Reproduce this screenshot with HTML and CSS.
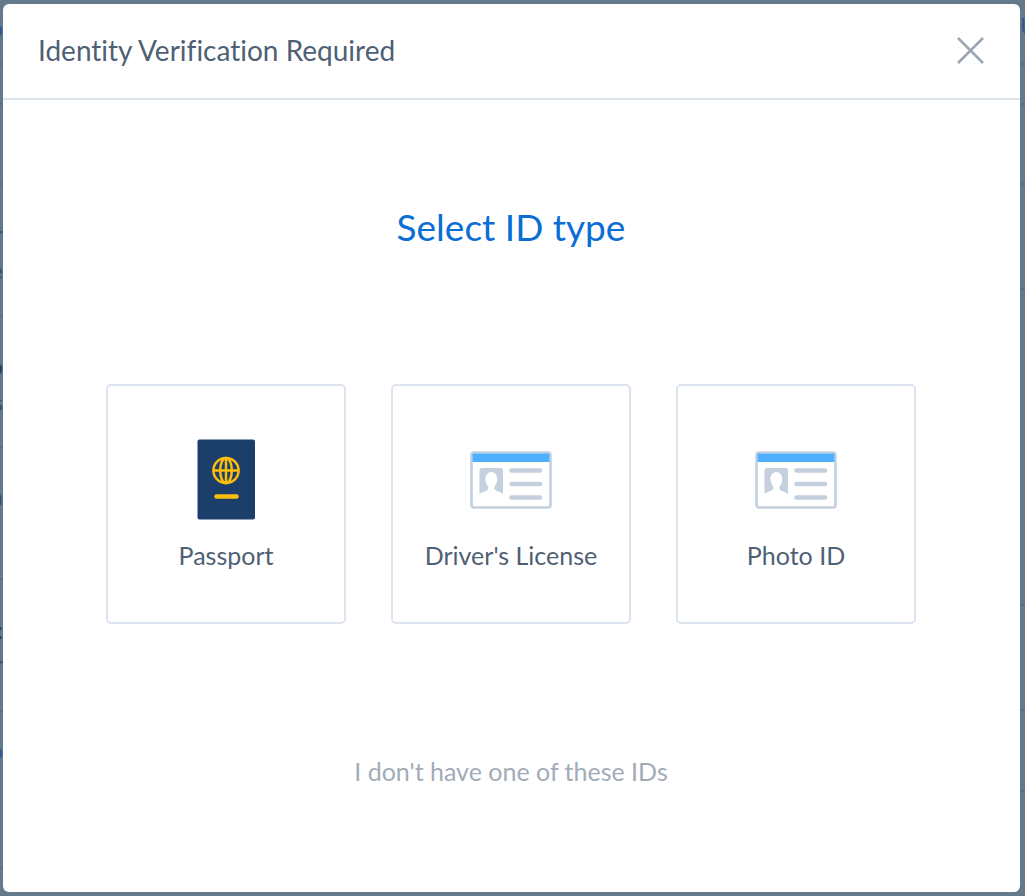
FILE: index.html
```html
<!DOCTYPE html>
<html lang="en">
<head>
<meta charset="utf-8">
<meta name="viewport" content="width=device-width, initial-scale=1">
<title>Identity Verification Required</title>
<link rel="stylesheet" href="styles.css">
</head>
<body>
<div class="page-behind" aria-hidden="true">
  <div class="edge edge-left">
    <span class="peek peek-link" style="top:14px">o</span>
    <span class="peek peek-link" style="top:220px">r</span>
    <span class="peek" style="top:256px">e</span>
    <span class="peek peek-dark" style="top:352px">o</span>
    <span class="peek" style="top:388px">s</span>
    <span class="peek" style="top:482px">n</span>
    <span class="peek peek-dark" style="top:616px">:</span>
    <span class="peek" style="top:650px">r</span>
    <span class="peek peek-link" style="top:736px">o</span>
    <i class="rule" style="top:63px"></i>
    <i class="rule" style="top:103px"></i>
    <i class="rule" style="top:183px"></i>
    <i class="rule" style="top:315px"></i>
    <i class="rule" style="top:446px"></i>
    <i class="rule" style="top:578px"></i>
    <i class="rule" style="top:710px"></i>
    <i class="rule" style="top:867px"></i>
  </div>
  <div class="edge edge-right">
    <span class="peek peek-link" style="top:12px">U</span>
    <i class="rule" style="top:63px"></i>
    <i class="rule" style="top:103px"></i>
    <i class="rule" style="top:183px"></i>
    <i class="rule" style="top:288px"></i>
    <i class="rule" style="top:604px"></i>
    <i class="rule" style="top:709px"></i>
    <i class="rule" style="top:790px"></i>
  </div>
</div>
<main class="dialog" role="dialog" aria-modal="true" aria-labelledby="dialog-title">
  <header class="dialog-header">
    <h1 class="dialog-title" id="dialog-title">Identity Verification Required</h1>
    <button class="close" type="button" aria-label="Close">
      <svg width="28" height="28" viewBox="0 0 28 28" fill="none" stroke="#9ba6b2" stroke-width="2.5"><path d="M2 2 27 27M27 2 2 27"/></svg>
    </button>
  </header>
  <div class="dialog-body">
    <h2 class="heading">Select ID type</h2>
    <div class="options">
      <button class="option" type="button">
        <svg class="option-icon" viewBox="0 0 82 82" fill="none">
          <rect x="12.500" y="1.500" width="57.500" height="80" rx="2" fill="#1b3e6b"/>
          <g stroke="#fdbd0b" stroke-width="2.5">
            <circle cx="41" cy="32.500" r="12.600"/>
            <ellipse cx="41" cy="32.500" rx="5.800" ry="12.600"/>
            <path d="M41 20v25M28.500 32.500h25"/>
          </g>
          <path d="M31.500 58.500h20" stroke="#fdbd0b" stroke-width="4.500" stroke-linecap="round"/>
        </svg>
        <span class="option-label">Passport</span>
      </button>
      <button class="option" type="button">
        <svg class="option-icon" viewBox="0 -1 82 82" fill="none">
          <rect x="1.500" y="13.500" width="79" height="55" rx="2.500" stroke="#c4d0dd" stroke-width="2.600"/>
          <path d="M2.500 14.500h77v8.500h-77z" fill="#4eaeff"/>
          <path d="M12 29h18.500a2.500 2.500 0 0 1 2.500 2.500V55c-2-2-6-2.500-8-4.300-1.300-1.200-.8-2.700.3-4.200 1.300-2 1.900-4.300 1.900-6.500 0-4-2.500-7-5.900-7s-5.900 3-5.900 7c0 2.200.7 4.500 2 6.500 1 1.500 1.500 3 .2 4.200-2 1.800-6.100 2.300-8.100 4.300V31.500A2.500 2.500 0 0 1 12 29z" fill="#c4d0dd"/>
          <path d="M41.500 31.500h28.500M41.500 45h28.500M41.500 58.500h28.500" stroke="#c4d0dd" stroke-width="4.600" stroke-linecap="round"/>
        </svg>
        <span class="option-label">Driver's License</span>
      </button>
      <button class="option" type="button">
        <svg class="option-icon" viewBox="0 -1 82 82" fill="none">
          <rect x="1.500" y="13.500" width="79" height="55" rx="2.500" stroke="#c4d0dd" stroke-width="2.600"/>
          <path d="M2.500 14.500h77v8.500h-77z" fill="#4eaeff"/>
          <path d="M12 29h18.500a2.500 2.500 0 0 1 2.500 2.500V55c-2-2-6-2.500-8-4.300-1.300-1.200-.8-2.700.3-4.200 1.300-2 1.900-4.300 1.900-6.500 0-4-2.500-7-5.900-7s-5.900 3-5.900 7c0 2.200.7 4.500 2 6.500 1 1.500 1.500 3 .2 4.200-2 1.800-6.100 2.300-8.100 4.300V31.500A2.500 2.500 0 0 1 12 29z" fill="#c4d0dd"/>
          <path d="M41.500 31.500h28.500M41.500 45h28.500M41.500 58.500h28.500" stroke="#c4d0dd" stroke-width="4.600" stroke-linecap="round"/>
        </svg>
        <span class="option-label">Photo ID</span>
      </button>
    </div>
    <a class="no-id" href="#">I don't have one of these IDs</a>
  </div>
</main>
</body>
</html>
```

FILE: styles.css
```css
* { box-sizing: border-box; }

body {
  margin: 0;
  min-height: 100vh;
  padding: 4px 5px 4px 3px;
  display: flex;
  background: #65798c;
  color: #4f5f74;
  font-family: Lato, "Open Sans", sans-serif;
  font-variant-ligatures: none;
}

.page-behind {
  position: absolute;
  inset: 0;
  overflow: hidden;
}

.edge {
  position: absolute;
  top: 0;
  bottom: 0;
  overflow: hidden;
}

.edge-left { left: 0; width: 3px; }
.edge-right { right: 0; width: 5px; }

.peek {
  position: absolute;
  right: 0;
  font-size: 24px;
  line-height: 28px;
  color: #3b526b;
}

.edge-right .peek {
  right: auto;
  left: 0;
}

.peek-link { color: #2f5b8e; }
.peek-dark { color: #28405a; }

.rule {
  position: absolute;
  left: 0;
  width: 100%;
  height: 2px;
  background: #5a6e87;
}

.dialog {
  position: relative;
  flex: 1;
  display: flex;
  flex-direction: column;
  background: #fff;
  border-radius: 6px;
}

.dialog-header {
  display: flex;
  align-items: center;
  justify-content: space-between;
  padding: 28px 36px 30px 35px;
  border-bottom: 2px solid #dde3eb;
}

.dialog-title {
  margin: 0;
  font-size: 28px;
  line-height: 36px;
  font-weight: 400;
}

.close {
  display: flex;
  padding: 0;
  border: 0;
  background: none;
  cursor: pointer;
}

.dialog-body {
  flex: 1;
  display: flex;
  flex-direction: column;
  align-items: center;
  padding: 103px 25px 103px 24px;
}

.heading {
  margin: 0 0 133px;
  color: #0a6ed6;
  font-size: 37px;
  line-height: 48px;
  font-weight: 400;
}

.options {
  display: flex;
  flex-wrap: wrap;
  justify-content: center;
  gap: 45px;
}

.option {
  width: 240px;
  min-height: 240px;
  display: flex;
  flex-direction: column;
  align-items: center;
  padding: 52px 8px 40px;
  border: 2px solid #dde3ee;
  border-radius: 5px;
  background: #fff;
  color: inherit;
  font-family: inherit;
  font-variant-ligatures: inherit;
  cursor: pointer;
}

.option-icon {
  width: 82px;
  height: 82px;
}

.option-label {
  margin-top: 19px;
  font-size: 25px;
  line-height: 32px;
}

.no-id {
  margin-top: 131px;
  color: #a1acb8;
  font-size: 25px;
  line-height: 32px;
  text-decoration: none;
}
```
